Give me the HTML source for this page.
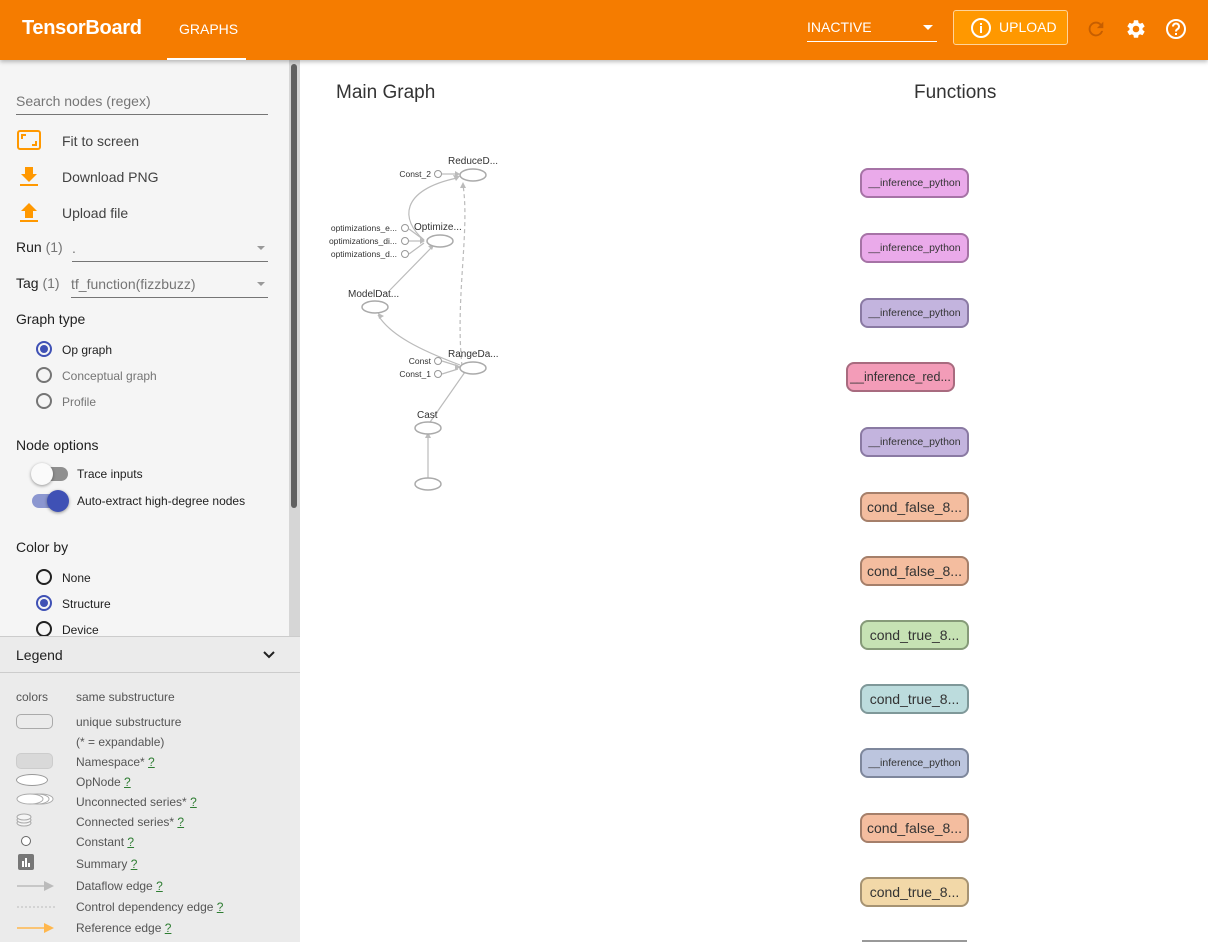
<!DOCTYPE html>
<html><head><meta charset="utf-8"><style>
*{box-sizing:border-box;margin:0;padding:0}
html,body{width:1208px;height:942px;overflow:hidden}
body{font-family:"Liberation Sans",Roboto,sans-serif;background:#fff;position:relative;color:#212121}
.hdr{position:absolute;left:0;top:0;width:1208px;height:60px;background:#f57c00;color:#fff;box-shadow:0 2px 4px rgba(0,0,0,.25);z-index:3}
.a{position:absolute}
.side{position:absolute;left:0;top:60px;width:300px;height:576px;background:#f5f5f5}
.leg{position:absolute;left:0;top:636px;width:300px;height:306px;background:#ebebeb;border-top:1px solid #ccc}
.t{position:absolute;font-size:14px;white-space:nowrap}
.g{color:#757575}
.radio{position:absolute;width:16px;height:16px;border-radius:50%;border:2px solid #757575}
.radio.on{border-color:#3f51b5}
.radio.on::after{content:"";position:absolute;left:2px;top:2px;width:8px;height:8px;border-radius:50%;background:#3f51b5}
.radio.k{border-color:#212121}
.s12{font-size:12px}
.fn{position:absolute;width:109px;height:30px;border-radius:8px;border:2px solid;font-size:14px;color:#333;text-align:center;line-height:26px;white-space:nowrap;overflow:hidden}
.sm{font-size:10.5px}
.lt{position:absolute;left:76px;font-size:12px;color:#555;white-space:nowrap}
.q{color:#2e7d32;text-decoration:underline}
</style></head><body>
<div class="hdr">
 <div class="t" style="left:22px;top:17px;font-size:20px;color:#fff;font-weight:bold;letter-spacing:-0.3px">TensorBoard</div>
 <div class="t" style="left:179px;top:21px;font-size:14px;color:#fff">GRAPHS</div>
 <div class="a" style="left:167px;top:58px;width:79px;height:2px;background:#fff"></div>
 <div class="t" style="left:807px;top:19px;color:#fff">INACTIVE</div>
 <div class="a" style="left:923px;top:25px;border:5px solid transparent;border-top-color:#fff"></div>
 <div class="a" style="left:807px;top:41px;width:130px;height:1px;background:#fff"></div>
 <div class="a" style="left:953px;top:10px;width:115px;height:35px;background:#ff9800;border:1px solid #ffd49a;border-radius:3px"></div>
 <svg class="a" style="left:970px;top:17px" width="22" height="22" viewBox="0 0 22 22"><circle cx="11" cy="11" r="9" fill="none" stroke="#fff" stroke-width="2"/><rect x="10" y="9" width="2" height="7" fill="#fff"/><rect x="10" y="6" width="2" height="2" fill="#fff"/></svg>
 <div class="t" style="left:999px;top:19px;color:#fff">UPLOAD</div>
 <svg class="a" style="left:1085px;top:18px" width="22" height="22" viewBox="0 0 24 24"><path d="M17.65 6.35A7.95 7.95 0 0 0 12 4a8 8 0 1 0 7.73 10h-2.08A6 6 0 1 1 12 6c1.66 0 3.14.69 4.22 1.78L13 11h7V4z" fill="#c65e00"/></svg>
 <svg class="a" style="left:1125px;top:18px" width="22" height="22" viewBox="0 0 24 24"><path fill="#fff" d="M19.14 12.94c.04-.3.06-.61.06-.94 0-.32-.02-.64-.07-.94l2.030-1.58a.49.49 0 0 0 .12-.61l-1.92-3.32a.49.49 0 0 0-.59-.22l-2.39.96c-.5-.38-1.03-.7-1.62-.94l-.36-2.54a.48.48 0 0 0-.48-.41h-3.84c-.24 0-.43.17-.47.41l-.36 2.54c-.59.24-1.13.57-1.62.94l-2.39-.96a.48.48 0 0 0-.59.22L2.74 8.87a.47.47 0 0 0 .12.61l2.03 1.58c-.05.3-.09.63-.09.94s.02.64.07.94l-2.030 1.58a.49.49 0 0 0-.12.61l1.92 3.32c.12.22.37.29.59.22l2.39-.96c.5.38 1.03.7 1.62.94l.36 2.54c.05.24.24.41.48.41h3.84c.24 0 .44-.17.47-.41l.36-2.54c.59-.24 1.13-.56 1.62-.94l2.39.96c.22.08.47 0 .59-.22l1.92-3.32a.47.47 0 0 0-.12-.61zM12 15.6A3.6 3.6 0 1 1 12 8.4a3.6 3.6 0 0 1 0 7.2z"/></svg>
 <svg class="a" style="left:1165px;top:18px" width="22" height="22" viewBox="0 0 22 22"><circle cx="11" cy="11" r="9" fill="none" stroke="#fff" stroke-width="2"/><path d="M8 8.5a3 3 0 1 1 4.5 2.6c-1 .6-1.5 1-1.5 2.4" fill="none" stroke="#fff" stroke-width="2"/><rect x="10" y="15" width="2" height="2" fill="#fff"/></svg>
</div>

<div class="side">
 <div class="a" style="left:289px;top:0;width:11px;height:576px;background:#d6d6d6"></div>
 <div class="a" style="left:291px;top:4px;width:6px;height:444px;background:#616161;border-radius:3px"></div>
 <div class="t g" style="left:16px;top:33px">Search nodes (regex)</div>
 <div class="a" style="left:16px;top:54px;width:252px;height:1px;background:#757575"></div>
 <svg class="a" style="left:17px;top:70px" width="24" height="20"><rect x="1" y="1" width="22" height="18" rx="2" fill="none" stroke="#ff9800" stroke-width="2"/><path d="M5 9V5h4M19 11v4h-4" fill="none" stroke="#ff9800" stroke-width="2"/></svg>
 <div class="t" style="left:62px;top:73px;color:#424242">Fit to screen</div>
 <svg class="a" style="left:20px;top:107px" width="18" height="20"><path d="M5 0h8v7h4l-8 8-8-8h4z M0 17h18v2H0z" fill="#ff9800"/></svg>
 <div class="t" style="left:62px;top:109px;color:#424242">Download PNG</div>
 <svg class="a" style="left:20px;top:143px" width="18" height="20"><path d="M5 15h8V8h4L9 0 1 8h4z M0 17h18v2H0z" fill="#ff9800"/></svg>
 <div class="t" style="left:62px;top:145px;color:#424242">Upload file</div>
 <div class="t" style="left:16px;top:179px">Run <span class="g">(1)</span></div>
 <div class="t g" style="left:72px;top:180px">.</div>
 <div class="a" style="left:257px;top:186px;border:4px solid transparent;border-top-color:#999"></div>
 <div class="a" style="left:72px;top:201px;width:196px;height:1px;background:#757575"></div>
 <div class="t" style="left:16px;top:215px">Tag <span class="g">(1)</span></div>
 <div class="t g" style="left:71px;top:216px">tf_function(fizzbuzz)</div>
 <div class="a" style="left:257px;top:222px;border:4px solid transparent;border-top-color:#999"></div>
 <div class="a" style="left:71px;top:237px;width:197px;height:1px;background:#757575"></div>
 <div class="t" style="left:16px;top:251px">Graph type</div>
 <div class="radio on" style="left:36px;top:281px"></div><div class="t s12" style="left:62px;top:283px">Op graph</div>
 <div class="radio" style="left:36px;top:307px"></div><div class="t s12 g" style="left:62px;top:309px">Conceptual graph</div>
 <div class="radio" style="left:36px;top:333px"></div><div class="t s12 g" style="left:62px;top:335px">Profile</div>
 <div class="t" style="left:16px;top:377px">Node options</div>
 <div class="a" style="left:34px;top:407px;width:34px;height:14px;border-radius:7px;background:#8f8f8f"></div>
 <div class="a" style="left:31px;top:403px;width:22px;height:22px;border-radius:50%;background:#fafafa;box-shadow:0 1px 3px rgba(0,0,0,.4)"></div>
 <div class="t s12" style="left:77px;top:407px">Trace inputs</div>
 <div class="a" style="left:32px;top:434px;width:34px;height:14px;border-radius:7px;background:#8c97d0"></div>
 <div class="a" style="left:47px;top:430px;width:22px;height:22px;border-radius:50%;background:#3f51b5;box-shadow:0 1px 3px rgba(0,0,0,.4)"></div>
 <div class="t s12" style="left:77px;top:434px">Auto-extract high-degree nodes</div>
 <div class="t" style="left:16px;top:479px">Color by</div>
 <div class="radio k" style="left:36px;top:509px"></div><div class="t s12" style="left:62px;top:511px">None</div>
 <div class="radio on" style="left:36px;top:535px"></div><div class="t s12" style="left:62px;top:537px">Structure</div>
 <div class="radio k" style="left:36px;top:561px"></div><div class="t s12" style="left:62px;top:563px">Device</div>
</div>

<div class="leg">
 <div class="t" style="left:16px;top:10px">Legend</div>
 <svg class="a" style="left:263px;top:13px" width="12" height="10"><path d="M1 2l5 5 5-5" fill="none" stroke="#212121" stroke-width="2"/></svg>
 <div class="a" style="left:0;top:35px;width:300px;height:1px;background:#ccc"></div>
 <div class="lt" style="left:16px;top:53px">colors</div><div class="lt" style="top:53px">same substructure</div>
 <div class="a" style="left:16px;top:77px;width:37px;height:15px;border:1.5px solid #aaa;border-radius:5px"></div>
 <div class="lt" style="top:78px">unique substructure</div>
 <div class="lt" style="top:98px">(* = expandable)</div>
 <div class="a" style="left:16px;top:116px;width:37px;height:16px;background:#d9d9d9;border:1px solid #ccc;border-radius:5px"></div>
 <div class="lt" style="top:118px">Namespace* <span class="q">?</span></div>
 <div class="a" style="left:16px;top:137px;width:32px;height:12px;border:1.5px solid #999;border-radius:50%;background:#fff"></div>
 <div class="lt" style="top:138px">OpNode <span class="q">?</span></div>
 <svg class="a" style="left:16px;top:156px" width="40" height="12"><ellipse cx="25" cy="6" rx="12" ry="5" fill="#fff" stroke="#aaa"/><ellipse cx="21" cy="6" rx="12" ry="5" fill="#fff" stroke="#aaa"/><ellipse cx="14" cy="6" rx="13" ry="5" fill="#fff" stroke="#aaa"/></svg>
 <div class="lt" style="top:158px">Unconnected series* <span class="q">?</span></div>
 <svg class="a" style="left:16px;top:176px" width="18" height="14"><ellipse cx="8" cy="10" rx="7" ry="3" fill="#f5f5f5" stroke="#aaa"/><ellipse cx="8" cy="7" rx="7" ry="3" fill="#f5f5f5" stroke="#aaa"/><ellipse cx="8" cy="4" rx="7" ry="3" fill="#f5f5f5" stroke="#aaa"/></svg>
 <div class="lt" style="top:178px">Connected series* <span class="q">?</span></div>
 <div class="a" style="left:21px;top:199px;width:10px;height:10px;border:1px solid #666;border-radius:50%;background:#fff"></div>
 <div class="lt" style="top:198px">Constant <span class="q">?</span></div>
 <div class="a" style="left:18px;top:217px;width:16px;height:16px;background:#777;border-radius:2px"></div>
 <div class="a" style="left:22px;top:224px;width:2px;height:6px;background:#fff"></div><div class="a" style="left:25px;top:221px;width:2px;height:9px;background:#fff"></div><div class="a" style="left:28px;top:226px;width:2px;height:4px;background:#fff"></div>
 <div class="lt" style="top:220px">Summary <span class="q">?</span></div>
 <svg class="a" style="left:16px;top:243px" width="40" height="12"><path d="M1 6h28" stroke="#bbb" stroke-width="1.5"/><path d="M28 1l10 5-10 5z" fill="#bbb"/></svg>
 <div class="lt" style="top:242px">Dataflow edge <span class="q">?</span></div>
 <svg class="a" style="left:16px;top:264px" width="40" height="12"><path d="M1 6h38" stroke="#bbb" stroke-dasharray="2 2"/></svg>
 <div class="lt" style="top:263px">Control dependency edge <span class="q">?</span></div>
 <svg class="a" style="left:16px;top:285px" width="40" height="12"><path d="M1 6h28" stroke="#ffb74d" stroke-width="1.5"/><path d="M28 1l10 5-10 5z" fill="#ffb74d"/></svg>
 <div class="lt" style="top:284px">Reference edge <span class="q">?</span></div>
</div>

<div class="t" style="left:336px;top:82px;font-size:19px;color:#333">Main Graph</div>
<div class="t" style="left:914px;top:82px;font-size:19px;color:#333">Functions</div>

<svg class="a" style="left:0;top:0" width="1208" height="942">
<g fill="none" stroke="#bbb" stroke-width="1.2">
<path d="M462 366 C455 300 470 230 463 185" stroke-dasharray="4 3"/>
<path d="M424 240 C400 220 400 190 457 178"/>
<path d="M390 290 L432 247"/>
<path d="M460 365 C420 350 390 335 378 315"/>
<path d="M428 425 L465 372"/>
<path d="M428 478 L428 436"/>
<path d="M442 174 L456 174"/><path d="M409 229 L424 240"/><path d="M409 241 L422 241"/><path d="M409 254 L424 243"/>
<path d="M442 361 L458 366"/><path d="M442 374 L458 369"/>
</g>
<g fill="#bbb"><path d="M460 174l-5-3v6z"/><path d="M460 176l-7-1 3 6z"/><path d="M463 182l-3 6h6z"/><path d="M434 245l-6 1 4 4z"/><path d="M378 313l1 6 5-3z"/><path d="M428 432l-3 6h6z"/><path d="M467 369l-6 0 3 5z"/><path d="M425 241l-5-3v6z"/><path d="M461 367l-6-3 0 6z"/></g>
<g fill="#fff" stroke="#aaa" stroke-width="1.5">
<ellipse cx="473" cy="175" rx="13" ry="6"/><ellipse cx="440" cy="241" rx="13" ry="6"/><ellipse cx="375" cy="307" rx="13" ry="6"/><ellipse cx="473" cy="368" rx="13" ry="6"/><ellipse cx="428" cy="428" rx="13" ry="6"/><ellipse cx="428" cy="484" rx="13" ry="6"/>
</g>
<g fill="#fff" stroke="#999" stroke-width="1"><circle cx="438" cy="174" r="3.5"/><circle cx="405" cy="228" r="3.5"/><circle cx="405" cy="241" r="3.5"/><circle cx="405" cy="254" r="3.5"/><circle cx="438" cy="361" r="3.5"/><circle cx="438" cy="374" r="3.5"/></g>
<g font-family="Liberation Sans,sans-serif" fill="#333">
<text x="448" y="164" font-size="10">ReduceD...</text>
<text x="414" y="230" font-size="10">Optimize...</text>
<text x="348" y="297" font-size="10">ModelDat...</text>
<text x="448" y="357" font-size="10">RangeDa...</text>
<text x="417" y="418" font-size="10">Cast</text>
<g font-size="8.5" text-anchor="end"><text x="431" y="177">Const_2</text><text x="397" y="231">optimizations_e...</text><text x="397" y="244">optimizations_di...</text><text x="397" y="257">optimizations_d...</text><text x="431" y="364">Const</text><text x="431" y="377">Const_1</text></g>
</g>
</svg>

<div class="fn sm" style="left:860px;top:168px;background:#eaaaea;border-color:#a673a6">__inference_python</div>
<div class="fn sm" style="left:860px;top:233px;background:#eaaaea;border-color:#a673a6">__inference_python</div>
<div class="fn sm" style="left:860px;top:298px;background:#c3b4de;border-color:#8a7aa3">__inference_python</div>
<div class="fn" style="left:846px;top:362px;background:#f39cb8;border-color:#a86b7f;font-size:12.5px">__inference_red...</div>
<div class="fn sm" style="left:860px;top:427px;background:#c3b4de;border-color:#8a7aa3">__inference_python</div>
<div class="fn" style="left:860px;top:492px;background:#f4bd9f;border-color:#a57f6a">cond_false_8...</div>
<div class="fn" style="left:860px;top:556px;background:#f4bd9f;border-color:#a57f6a">cond_false_8...</div>
<div class="fn" style="left:860px;top:620px;background:#c6e2b4;border-color:#869a79">cond_true_8...</div>
<div class="fn" style="left:860px;top:684px;background:#bcdcdd;border-color:#7f9899">cond_true_8...</div>
<div class="fn sm" style="left:860px;top:748px;background:#bcc5de;border-color:#7e879c">__inference_python</div>
<div class="fn" style="left:860px;top:813px;background:#f4bd9f;border-color:#a57f6a">cond_false_8...</div>
<div class="fn" style="left:860px;top:877px;background:#f2d8a8;border-color:#a69373">cond_true_8...</div>
<div class="a" style="left:862px;top:940px;width:105px;height:2px;background:#999"></div>
</body></html>
